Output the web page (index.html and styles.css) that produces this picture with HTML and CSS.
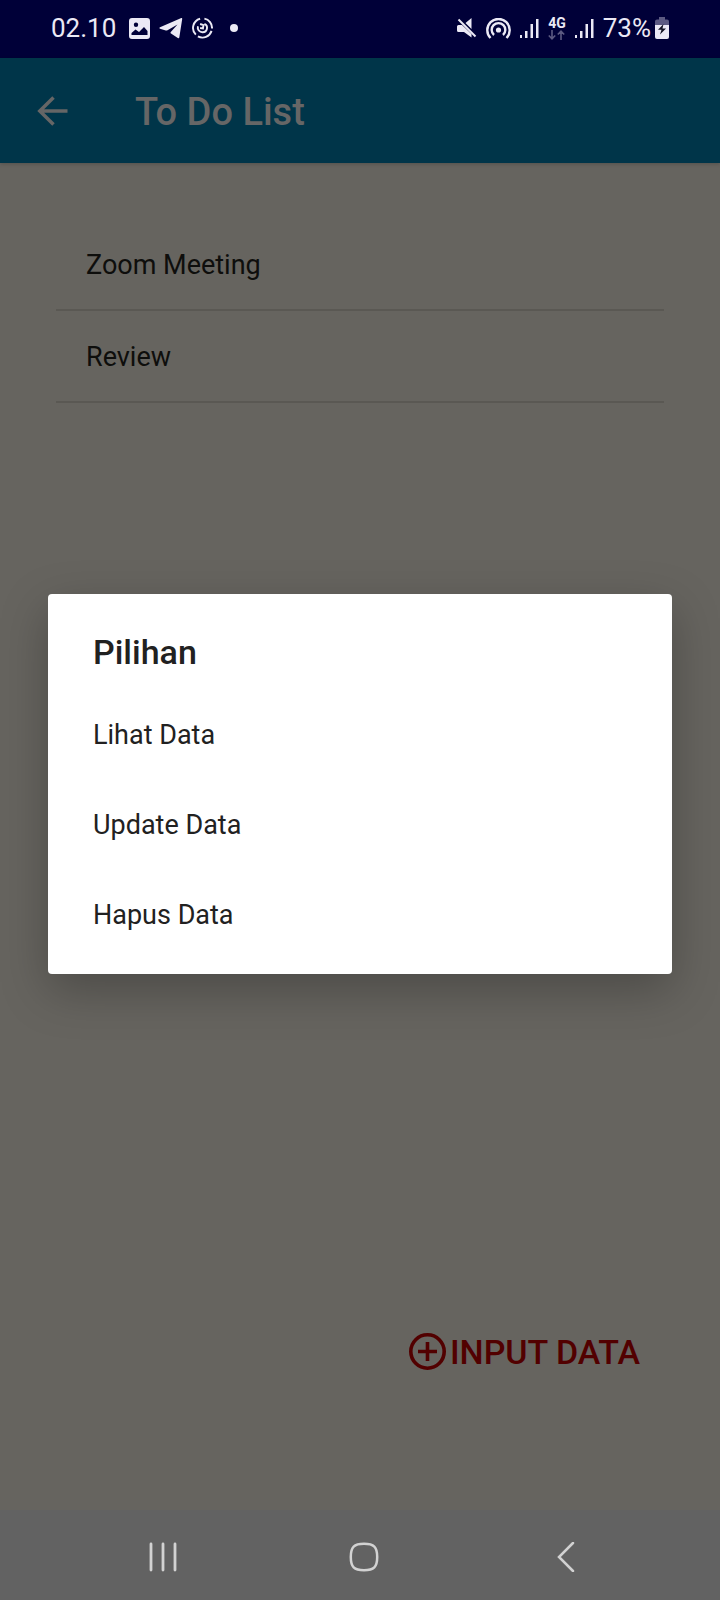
FILE: index.html
```html
<!DOCTYPE html>
<html lang="id">
<head>
<meta charset="utf-8">
<meta name="viewport" content="width=device-width, initial-scale=1">
<title>To Do List</title>
<link rel="stylesheet" href="styles.css">
</head>
<body>
<div class="screen">
  <header class="status">
    <div class="status-left">
      <time class="clock">02.10</time>
      <svg width="21" height="21" viewBox="0 0 21 21" aria-hidden="true">
        <path fill="currentColor" fill-rule="evenodd" d="M3 0h15a3 3 0 0 1 3 3v15a3 3 0 0 1-3 3H3a3 3 0 0 1-3-3V3a3 3 0 0 1 3-3zM7 4.500a2.200 2.200 0 1 0 0 4.400 2.200 2.200 0 0 0 0-4.400zM2.500 17h16v-4L15 9l-5 5-3.500-2.500-4 3.500z"/>
      </svg>
      <svg width="24" height="22" viewBox="0 0 24 22" aria-hidden="true">
        <path fill="currentColor" d="M22.300 1.100q1-.400.900.800L20.300 20.500q-.400 1.200-1.500.600L12 16.500q-1-.800 0-1.700L18.500 7.500 8.500 13.300q-.900.400-1.700.200L1 11.700q-1.400-.700 0-1.500z"/>
      </svg>
      <svg width="21" height="22" viewBox="0 0 22 22" fill="none" stroke="currentColor" stroke-width="2" aria-hidden="true">
        <path d="M8.500 1.300A10 10 0 0 0 4 18M6.200 19.800A10 10 0 0 0 20.500 14M21 11.500A10 10 0 0 0 13 1.200"/>
        <path d="M6.200 9.200a5 5 0 0 0 5 6.300 4.600 4.600 0 0 0 1.800-8.800M8.500 6.800l3.500 1.200-.500 3.500-3-.500"/>
      </svg>
      <span class="dot"></span>
    </div>
    <div class="status-right">
      <svg width="20" height="20" viewBox="0 0 20 20" aria-hidden="true">
        <path fill="currentColor" d="M14.500 0v11L8.500 5zM1.500 7H5L14.500 16v3.500L7 14H1.500A1.500 1.500 0 0 1 0 12.500v-4A1.500 1.500 0 0 1 1.500 7z"/>
        <path stroke="currentColor" stroke-width="2" d="m1.500 1.500 17 17"/>
      </svg>
      <svg width="25" height="21" viewBox="0 0 25 21" fill="none" stroke="currentColor" stroke-width="2.400" aria-hidden="true">
        <path d="M4.500 20a11.200 11.200 0 1 1 16 0M8 17a6.800 6.800 0 1 1 9 0"/>
        <circle cx="12.500" cy="12" r="2.600" fill="currentColor" stroke="none"/>
      </svg>
      <svg width="19" height="20" viewBox="0 0 19 20" aria-hidden="true">
        <path fill="currentColor" d="M0 17h2v3H0zM5 13h2.500v7H5zM10.500 6H13v14h-2.500zM16 1h2.500v19H16z"/>
      </svg>
      <span class="network">
        <span>4G</span>
        <svg width="17" height="10" viewBox="0 0 17 10" fill="none" stroke="currentColor" stroke-width="1.600" aria-hidden="true">
          <path d="M4 0v8.500M.800 5.500 4 8.800l3.200-3.300M13 10V1.500M9.800 4.500 13 1.200l3.200 3.300"/>
        </svg>
      </span>
      <svg width="19" height="20" viewBox="0 0 19 20" aria-hidden="true">
        <path fill="currentColor" d="M0 17h2v3H0zM5 13h2.500v7H5zM10.500 6H13v14h-2.500zM16 1h2.500v19H16z"/>
      </svg>
      <span class="charge">
        <span>73%</span>
        <svg width="14" height="22" viewBox="0 0 14 22" aria-hidden="true">
          <path fill="#5c5a82" d="M4 0h6v2.500h2A2 2 0 0 1 14 4.500V9H0V4.500a2 2 0 0 1 2-2h2z"/>
          <path fill="currentColor" d="M0 8h14v12a2 2 0 0 1-2 2H2a2 2 0 0 1-2-2z"/>
          <path fill="#141424" d="M8.500 7 3 12.800h3.500L5 17.500l6-6H7.500z"/>
        </svg>
      </span>
    </div>
  </header>

  <div class="app">
    <div class="appbar">
      <button class="back" type="button" aria-label="Kembali">
        <svg width="32" height="32" viewBox="0 0 32 32" fill="none" stroke="currentColor" stroke-width="3.500" aria-hidden="true">
          <path d="M30.500 15H3.500M16.500 1.500 2.800 15l13.700 13.500"/>
        </svg>
      </button>
      <h1 class="title">To Do List</h1>
    </div>
    <main class="content">
      <ul class="list">
        <li class="row">Zoom Meeting</li>
        <li class="row">Review</li>
      </ul>
      <button class="add" type="button">
        <svg width="38" height="38" viewBox="0 0 38 38" fill="none" stroke="currentColor" stroke-width="3.600" aria-hidden="true">
          <circle cx="18.500" cy="18.500" r="16.700"/>
          <path d="M18.500 9v19M9 18.500h19"/>
        </svg>
        <span>INPUT DATA</span>
      </button>
    </main>
    <div class="overlay">
      <section class="dialog" role="dialog" aria-labelledby="dialog-title">
        <h2 class="dialog-title" id="dialog-title">Pilihan</h2>
        <button class="option" type="button">Lihat Data</button>
        <button class="option" type="button">Update Data</button>
        <button class="option" type="button">Hapus Data</button>
      </section>
    </div>
  </div>

  <nav class="navbar">
    <button class="nav-button" type="button" aria-label="Aplikasi terbaru">
      <svg width="30" height="30" viewBox="0 0 30 30" stroke="currentColor" stroke-width="2.800" stroke-linecap="round" aria-hidden="true">
        <path d="M3 2v26M15 2v26M27 2v26"/>
      </svg>
    </button>
    <button class="nav-button" type="button" aria-label="Beranda">
      <svg width="30" height="30" viewBox="0 0 30 30" fill="none" stroke="currentColor" stroke-width="2.500" aria-hidden="true">
        <path d="M15 1.800c10 0 13.200 3.200 13.200 13.200S25 28.200 15 28.200 1.800 25 1.800 15 5 1.800 15 1.800z"/>
      </svg>
    </button>
    <button class="nav-button" type="button" aria-label="Kembali ke layar sebelumnya">
      <svg width="30" height="30" viewBox="0 0 30 30" fill="none" stroke="currentColor" stroke-width="2.500" stroke-linecap="round" aria-hidden="true">
        <path d="M23 1 9 15l14 14"/>
      </svg>
    </button>
  </nav>
</div>
</body>
</html>
```
FILE: styles.css
```css
* {
  box-sizing: border-box;
}

body {
  margin: 0;
  font-family: Roboto, "Noto Sans", sans-serif;
}

h1,
h2,
ul {
  margin: 0;
  padding: 0;
}

button {
  border: 0;
  padding: 0;
  background: none;
  color: inherit;
  font: inherit;
  cursor: pointer;
}

svg {
  display: block;
  flex: none;
}

.screen {
  display: flex;
  flex-direction: column;
  min-height: 100vh;
  background: #66645f;
}

.status {
  display: flex;
  justify-content: space-between;
  align-items: center;
  height: 58px;
  padding: 0 51px 2px;
  background: #000038;
  color: #ebe9f5;
  font-size: 26px;
}

.status-left,
.status-right {
  display: flex;
  align-items: center;
  gap: 9px;
}

.clock {
  margin-right: 4px;
}

.dot {
  width: 8px;
  height: 8px;
  margin-left: 8px;
  border-radius: 50%;
  background: currentColor;
}

.network {
  display: flex;
  flex-direction: column;
  align-items: center;
  font-size: 14px;
  line-height: 13px;
  font-weight: 700;
}

.network svg {
  color: #5c5a82;
}

.charge {
  display: flex;
  align-items: center;
  gap: 4px;
}

.app {
  position: relative;
  flex: 1;
  display: flex;
  flex-direction: column;
}

.appbar {
  display: flex;
  align-items: center;
  gap: 66px;
  height: 105px;
  padding: 2px 37px 0;
  background: #003549;
  color: #666666;
  box-shadow: 0 1px 4px rgba(0, 0, 0, 0.2);
}

.title {
  font-size: 38px;
  line-height: 44px;
  font-weight: 500;
}

.content {
  flex: 1;
  display: flex;
  flex-direction: column;
  justify-content: space-between;
  padding: 56px 56px 135px;
}

.list {
  list-style: none;
}

.row {
  padding: 2px 30px 0;
  border-bottom: 2px solid #5a5853;
  color: #0e0e0c;
  font-size: 27px;
  line-height: 88px;
}

.add {
  display: flex;
  align-items: center;
  align-self: flex-end;
  gap: 3px;
  margin-right: 24px;
  color: #520000;
  font-size: 34px;
  line-height: 46px;
  font-weight: 500;
}

.overlay {
  position: absolute;
  inset: 0;
  display: flex;
  align-items: center;
  justify-content: center;
  padding: 0 48px;
}

.dialog {
  display: flex;
  flex-direction: column;
  flex: 1;
  padding: 30px 0 14px;
  border-radius: 4px;
  background: #ffffff;
  color: #212121;
  box-shadow: 0 16px 48px rgba(0, 0, 0, 0.26);
}

.dialog-title {
  padding: 0 45px 10px;
  font-size: 34px;
  line-height: 56px;
  font-weight: 500;
}

.option {
  padding: 0 45px;
  font-size: 27px;
  line-height: 90px;
  text-align: left;
}

.navbar {
  display: flex;
  justify-content: space-around;
  align-items: center;
  height: 90px;
  padding: 4px 54px 0 62px;
  background: #626262;
  color: #d2d2d2;
}

.nav-button {
  padding: 6px 24px;
}
```
